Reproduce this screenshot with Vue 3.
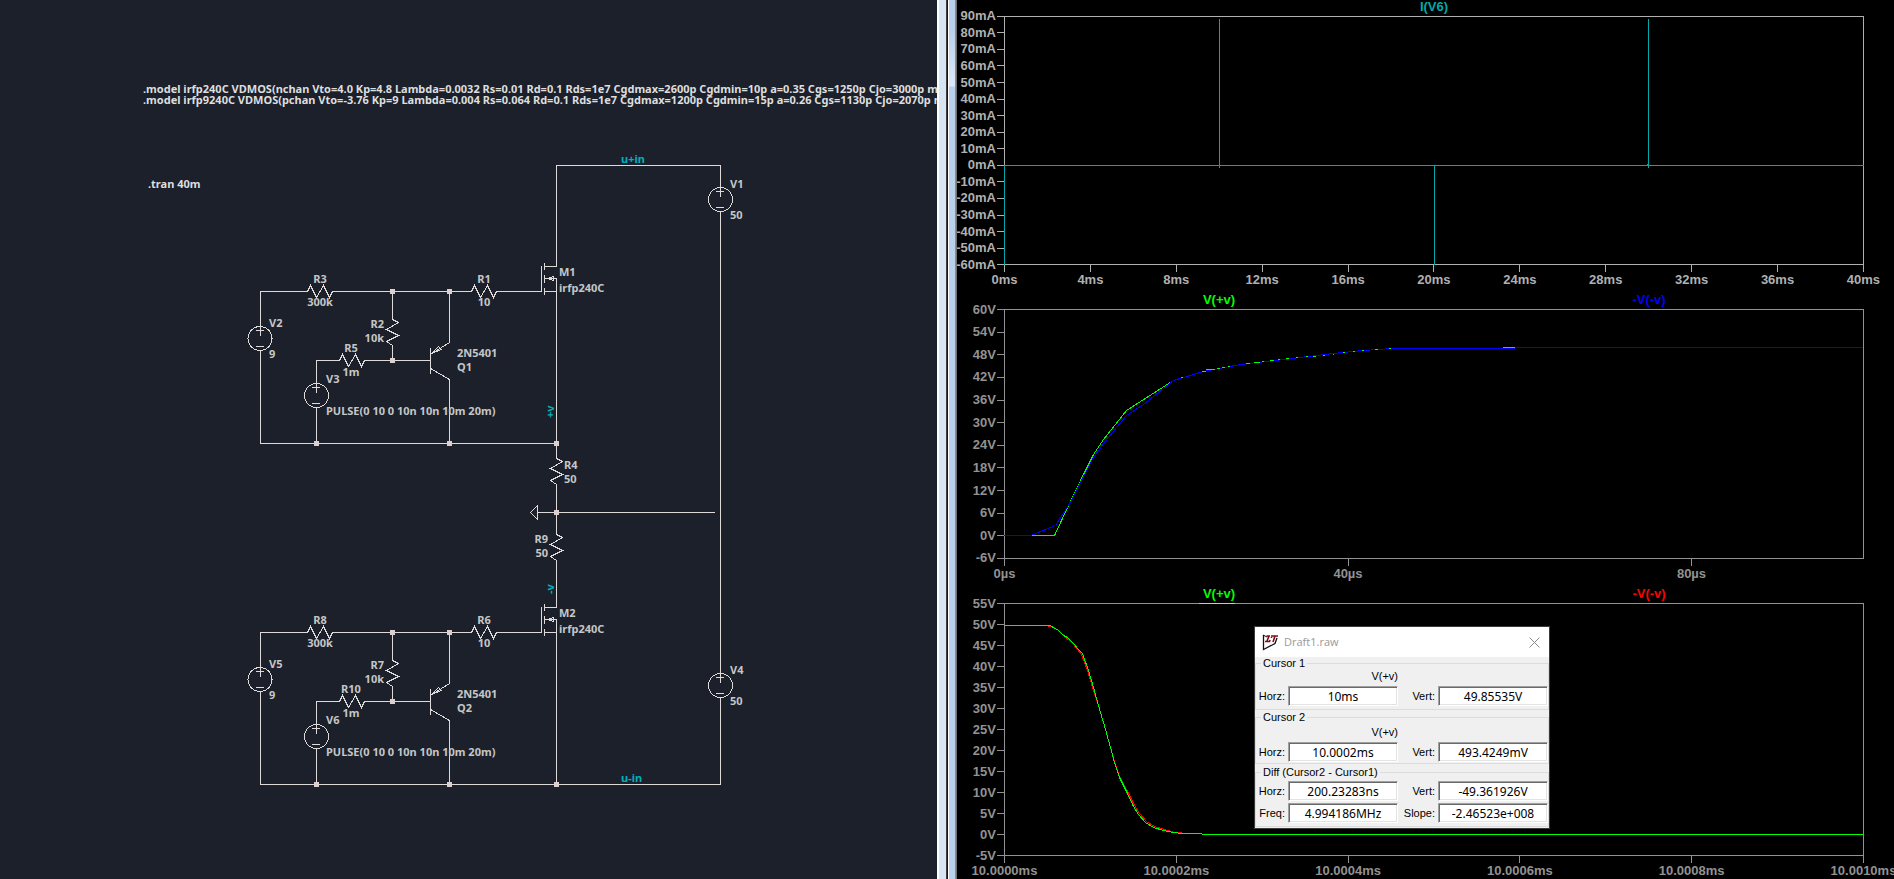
<script setup>
import { ref } from 'vue'

const range = (from, to, step, unit) => {
  const out = []
  for (let v = from; step > 0 ? v <= to : v >= to; v += step) out.push(v + unit)
  return out
}

const plots = [
  {
    id: 'current',
    height: 249,
    legends: [{ text: 'I(V6)', tone: 'teal' }],
    y: range(90, -60, -10, 'mA'),
    x: range(0, 40, 4, 'ms'),
    span: 100,
    lines: [
      { tone: 'teal', d: 'M0.5 248.5V149.5H860M215.5 3V152M430.5 149V249M644.5 3V152M643.5 148V150' }
    ]
  },
  {
    id: 'rise',
    height: 250,
    legends: [{ text: 'V(+v)', tone: 'green' }, { text: '-V(-v)', tone: 'blue' }],
    y: range(60, -6, -6, 'V'),
    x: range(0, 80, 40, 'µs'),
    span: 80,
    lines: [
      { tone: 'green', d: 'M27 226.5H50.5L64.5 196.5L78.5 167.5L89.5 145.5L99.5 130.5L122.5 101.5L169.5 71.5L199.5 62.5' },
      { tone: 'blue', d: 'M0 226.5H27L51.5 216.5L64.5 196.5L78.5 169.5L89.5 148.5L99.5 134.5L122.5 106.5L139.5 95.5L169.5 71.5L199.5 62.5L236.5 55.5L279.5 50.5L329.5 44.5L359.5 41.5L388 39.5H511M511 38.5H859' },
      { tone: 'green', d: 'M177 68.5h2M198 62.5h4M202 60.5h9M213 59.5h3M218 58.5h3M224 57.5h2M242 54.5h4M250 53.5h6M258 52.5h2M266 51.5h4M274 50.5h2M282 49.5h3M292 48.5h2M302 47.5h2M309 47.5h3M319 46.5h2M329 45.5h1M339 43.5h2M349 42.5h2M358 41.5h2M371 40.5h3M385 39.5h2M499 38.5h12' }
    ]
  },
  {
    id: 'fall',
    height: 253,
    legends: [{ text: 'V(+v)', tone: 'green' }, { text: '-V(-v)', tone: 'red' }],
    y: range(55, -5, -5, 'V'),
    x: ['10.0000ms', '10.0002ms', '10.0004ms', '10.0006ms', '10.0008ms', '10.0010ms'],
    span: 100,
    lines: [
      { tone: 'light', d: 'M195 0.5H231' },
      { tone: 'red', d: 'M44 23.5H48L54.5 27.5L68.5 40.5L73.5 46.5L77.5 51.5L83.5 67.5L88.5 84.5L94.5 102.5L101.5 126.5L106.5 144.5L110.5 158.5L115.5 173.5L123.5 188.5L130.5 202.5L135.5 210.5L142.5 218.5L150.5 223.5L160.5 226.5L170.5 229.5H178' },
      { tone: 'green', d: 'M0 22.5H46L54.5 27.5L59.5 32.5L63.5 34.5L69.5 40.5L74.5 46.5L78.5 50.5L84.5 67.5L89.5 84.5L94.5 102.5L101.5 126.5L106.5 144.5L110.5 159.5L115.5 174.5L123.5 190.5L129.5 203.5L134.5 211.5L141.5 219.5L149.5 224.5L159.5 227.5L169.5 229.5L178.5 230.5H198M198 231.5H859' }
    ]
  }
]

/* The two driver stages share one drawing, placed at different heights. */
const stages = [
  { y: 0, top: 'R3', gate: 'R1', bias: 'R2', base: 'R5', supply: 'V2', pulse: 'V3', fet: 'M1', bjt: 'Q1' },
  { y: 341, top: 'R8', gate: 'R6', bias: 'R7', base: 'R10', supply: 'V5', pulse: 'V6', fet: 'M2', bjt: 'Q2' }
]
const zigH = 'l3-6l6 12l7-12l6 12l3-6'
const zigV = 'l6 3l-12 7l12 6l-12 6l6 4'
const source = 'M-4-8H4M0.5-13V-3M-4 8H4'

const groups = [
  { title: 'Cursor 1', trace: 'V(+v)', fields: [['Horz:', '10ms'], ['Vert:', '49.85535V']] },
  { title: 'Cursor 2', trace: 'V(+v)', fields: [['Horz:', '10.0002ms'], ['Vert:', '493.4249mV']] },
  {
    title: 'Diff (Cursor2 - Cursor1)',
    fields: [['Horz:', '200.23283ns'], ['Vert:', '-49.361926V'], ['Freq:', '4.994186MHz'], ['Slope:', '-2.46523e+008']]
  }
]
const open = ref(true)
</script>

<template>
  <main class="workspace">
    <section class="schematic" aria-label="Schematic">
      <svg class="sheet" width="100%" height="100%">
        <g class="directive">
          <text x="143" y="93">.model irfp240C VDMOS(nchan Vto=4.0 Kp=4.8 Lambda=0.0032 Rs=0.01 Rd=0.1 Rds=1e7 Cgdmax=2600p Cgdmin=10p a=0.35 Cgs=1250p Cjo=3000p m=</text>
          <text x="143" y="104">.model irfp9240C VDMOS(pchan Vto=-3.76 Kp=9 Lambda=0.004 Rs=0.064 Rd=0.1 Rds=1e7 Cgdmax=1200p Cgdmin=15p a=0.26 Cgs=1130p Cjo=2070p m</text>
          <text x="148" y="188">.tran 40m</text>
        </g>

        <g class="wire">
          <path d="M556.5 266V165.5H720.5V187M720.5 212V673M720.5 698V784.5H556.5" />
          <path :d="'M556.5 443V458.5' + zigV + 'V534.5' + zigV + 'V607.5'" />
          <path d="M715 512.5H537.5M537.5 505.5V519.5L530.5 512.5Z" />
          <g v-for="y in [199.5, 685.5]" :key="y" :transform="`translate(720 ${y})`">
            <circle cx="0.5" r="12" /><path :d="source" />
          </g>
        </g>
        <rect class="node" x="554" y="510" width="5" height="5" />

        <g v-for="s in stages" :key="s.fet" :transform="`translate(0 ${s.y})`">
          <g class="wire">
            <path :d="'M260.5 326V291.5H307.5' + zigH + 'H471.5' + zigH + 'H541.5V265.5'" />
            <path d="M260.5 351V443.5H556.5V278.5H544.5M544.5 291.5H556.5M544.5 266.5H556.5" />
            <path d="M544.5 263V270M544.5 275V283M544.5 288V295M547 278.5L553.5 276.5V280.5Z" />
            <path :d="'M316.5 383V360.5H339.5' + zigH + 'H430.5M316.5 408V443.5'" />
            <path :d="'M392.5 291.5V319.5' + zigV + 'V360.5'" />
            <path d="M430.5 348V374M430.5 354.5L449.5 342.5V291.5M430.5 368.5L449.5 379.5V443.5" />
            <path d="M431.5 353.5L438.5 346.5L441.5 349.5Z" />
            <g transform="translate(260 338.5)"><circle r="12" /><path :d="source" /></g>
            <g transform="translate(316 395.5)"><circle cx="0.5" r="12" /><path :d="source" /></g>
          </g>
          <g class="node">
            <rect x="390" y="289" width="5" height="5" />
            <rect x="447" y="289" width="5" height="5" />
            <rect x="390" y="358" width="5" height="5" />
            <rect x="314" y="441" width="5" height="5" />
            <rect x="447" y="441" width="5" height="5" />
            <rect x="554" y="441" width="5" height="5" />
          </g>
          <g class="label middle">
            <text x="320" y="283">{{ s.top }}</text>
            <text x="320" y="306">300k</text>
            <text x="484" y="283">{{ s.gate }}</text>
            <text x="484" y="306">10</text>
            <text x="351" y="352">{{ s.base }}</text>
            <text x="351" y="376">1m</text>
          </g>
          <g class="label end">
            <text x="384" y="328">{{ s.bias }}</text>
            <text x="384" y="342">10k</text>
          </g>
          <g class="label">
            <text x="559" y="276">{{ s.fet }}</text>
            <text x="559" y="292">irfp240C</text>
            <text x="269" y="327">{{ s.supply }}</text>
            <text x="269" y="358">9</text>
            <text x="326" y="383">{{ s.pulse }}</text>
            <text x="326" y="415">PULSE(0 10 0 10n 10n 10m 20m)</text>
            <text x="457" y="357">2N5401</text>
            <text x="457" y="371">{{ s.bjt }}</text>
          </g>
        </g>

        <g class="label">
          <text x="730" y="188">V1</text>
          <text x="730" y="219">50</text>
          <text x="730" y="674">V4</text>
          <text x="730" y="705">50</text>
          <text x="564" y="469">R4</text>
          <text x="564" y="483">50</text>
        </g>
        <g class="label end">
          <text x="548" y="543">R9</text>
          <text x="548" y="557">50</text>
        </g>
        <g class="net">
          <text x="621" y="163">u+in</text>
          <text x="621" y="782">u-in</text>
          <text transform="translate(554 418) rotate(-90)">+v</text>
          <text transform="translate(554 594) rotate(-90)">-v</text>
        </g>
      </svg>
    </section>

    <div class="splitter" role="separator" aria-orientation="vertical">
      <i class="edge-left"></i><i class="gap"></i><i class="edge-right"></i><i class="rim"></i>
    </div>

    <section class="waves" aria-label="Waveforms">
      <article v-for="p in plots" :key="p.id" class="plot" :class="p.id">
        <header class="legends">
          <span v-for="l in p.legends" :key="l.text" :class="l.tone">{{ l.text }}</span>
        </header>
        <div class="y-axis">
          <span v-for="t in p.y" :key="t">{{ t }}</span>
        </div>
        <div class="frame">
          <svg :viewBox="`0 0 860 ${p.height}`" preserveAspectRatio="none">
            <path v-for="(l, i) in p.lines" :key="i" :class="l.tone" :d="l.d" />
          </svg>
        </div>
        <div class="x-axis">
          <div class="ticks" :style="{ width: p.span + '%' }">
            <span v-for="t in p.x" :key="t"><b>{{ t }}</b></span>
          </div>
        </div>
      </article>

      <div v-if="open" class="dialog" role="dialog" aria-label="Draft1.raw">
        <header class="titlebar">
          <svg class="logo" width="17" height="17" viewBox="0 0 17 17">
            <path d="M1.5 1V15.5L13 9.5L15 4" fill="none" stroke="#111" stroke-width="1.3" />
            <path d="M1 1L5 3" stroke="#111" />
            <path d="M4.500 2H8M7 2L5 7M3 7.500H7.500L8 6" fill="none" stroke="#8a0a14" stroke-width="1.6" />
            <path d="M9 2H16M13 2L11 8M9.500 3V4" fill="none" stroke="#8a0a14" stroke-width="1.6" />
          </svg>
          <h1>Draft1.raw</h1>
          <button type="button" aria-label="Close" @click="open = false">
            <svg width="11" height="11" viewBox="0 0 11 11"><path d="M0.500 0.500L10.500 10.500M10.500 0.500L0.500 10.500" fill="none" stroke="#8a8a8a" /></svg>
          </button>
        </header>
        <fieldset v-for="(g, gi) in groups" :key="g.title">
          <legend>{{ g.title }}</legend>
          <div class="fields">
            <span v-if="g.trace" class="trace">{{ g.trace }}</span>
            <template v-for="(f, fi) in g.fields" :key="f[0]">
              <label :for="`f${gi}${fi}`">{{ f[0] }}</label>
              <input :id="`f${gi}${fi}`" type="text" :value="f[1]" />
            </template>
          </div>
        </fieldset>
      </div>
    </section>
  </main>
</template>

<style>
body {
  background: #000;
}
</style>

<style scoped>
.workspace {
  display: flex;
  height: 100vh;
  overflow: hidden;
  background: #000;
}

.schematic {
  flex: 1 1 0;
  min-width: 0;
  background: #1b202b;
}
.sheet {
  display: block;
  font: bold 11px "Noto Sans", sans-serif;
}
.wire {
  fill: none;
  stroke: #dedada;
  stroke-width: 1;
  shape-rendering: crispEdges;
}
.node { fill: #dccfcf; }
.directive { fill: #dedede; }
.label { fill: #c6c6c6; }
.middle { text-anchor: middle; }
.end { text-anchor: end; }
.net { fill: #00b0be; }

.splitter {
  flex: none;
  display: flex;
  width: 20px;
}
.splitter i {
  box-sizing: border-box;
}
.edge-left {
  width: 9px;
  background: #d7e4f2;
  border-left: 2px solid #fcfdfe;
}
.gap {
  width: 2px;
  background: linear-gradient(to right, #555, #000);
}
.edge-right {
  width: 7px;
  border-left: 1px solid #fff;
  background: linear-gradient(to bottom, #b9d1ea 0, #b9d1ea 30px, #dfeaf6 86px, #b9d1ea 87px);
}
.rim {
  width: 2px;
  background: linear-gradient(to right, #9a9a9a, #666);
}

.waves {
  position: relative;
  flex: 1 1 0;
  min-width: 0;
  display: flex;
  flex-direction: column;
  overflow: hidden;
  background: #000;
  font: bold 13px/16px "Liberation Sans", Arial, sans-serif;
}
.plot {
  display: grid;
  grid-template-columns: 47px minmax(0, 1fr) 30px;
  grid-template-rows: 16px minmax(0, 1fr) 28px;
  min-height: 0;
  color: #929292;
}
.current { flex: 249 1 44px; color: #b0b0b0; }
.rise { flex: 250 1 44px; }
.fall { flex: 253 1 39px; grid-template-rows: 16px minmax(0, 1fr) 23px; }

.legends {
  grid-column: 2;
  display: flex;
  justify-content: space-around;
  line-height: 13px;
}
.legends span {
  flex: 1;
  text-align: center;
}
.y-axis {
  grid-column: 1;
  grid-row: 2;
  display: flex;
  flex-direction: column;
  justify-content: space-between;
  margin: -8px 0;
}
.y-axis span {
  display: flex;
  align-items: center;
  justify-content: flex-end;
  gap: 1px;
  height: 17px;
}
.y-axis span::after {
  content: "";
  flex: none;
  width: 7px;
  height: 1px;
  background: currentColor;
}
.frame {
  position: relative;
  grid-column: 2;
  grid-row: 2;
  border: 1px solid currentColor;
}
.frame svg {
  position: absolute;
  top: -1px;
  left: -1px;
  width: calc(100% + 2px);
  height: calc(100% + 2px);
}
.frame path {
  fill: none;
  stroke: currentColor;
  vector-effect: non-scaling-stroke;
  shape-rendering: crispEdges;
}
.x-axis {
  grid-column: 2;
  grid-row: 3;
}
.ticks {
  display: flex;
  justify-content: space-between;
}
.ticks span {
  display: flex;
  flex-direction: column;
  align-items: center;
  width: 1px;
  white-space: nowrap;
}
.ticks span::before {
  content: "";
  width: 1px;
  height: 7px;
  background: currentColor;
}
.teal { color: #00aaaa; }
.green { color: #00ff00; }
.blue { color: #0000ff; }
.red { color: #ff0000; }
.light { color: #c8c8c8; }

.dialog {
  position: absolute;
  right: 344px;
  bottom: 50px;
  width: 294px;
  border: 1px solid #3a3a3a;
  background: #f0f0f0;
  color: #000;
  font: 11px/13px "Liberation Sans", Arial, sans-serif;
}
.titlebar {
  display: flex;
  align-items: center;
  gap: 5px;
  height: 30px;
  padding: 0 9px 0 7px;
  background: #fff;
}
.titlebar h1 {
  flex: 1;
  margin: 0;
  color: #999;
  font: 11px/16px "Open Sans", sans-serif;
}
.titlebar button {
  display: flex;
  padding: 0;
  border: 0;
  background: none;
}
fieldset {
  min-width: 0;
  margin: 0 0 1px;
  padding: 0 0 3px;
  border: 1px solid #dcdcdc;
}
fieldset:nth-of-type(2) {
  margin-bottom: 2px;
  padding: 2px 0 1px;
}
fieldset:nth-of-type(3) {
  padding-top: 2px;
}
legend {
  margin-left: 5px;
  padding: 0 2px;
}
.fields {
  display: grid;
  grid-template-columns: 29px 110px 34px 110px;
  column-gap: 3px;
  row-gap: 2px;
  align-items: center;
}
.trace {
  grid-column: 1 / 3;
  height: 14px;
  line-height: 12px;
  text-align: right;
}
.trace + label {
  grid-column: 1;
}
label {
  text-align: right;
}
input {
  box-sizing: border-box;
  width: 110px;
  height: 20px;
  padding: 0 2px;
  border: 1px solid;
  border-color: #a0a0a0 #fff #fff #a0a0a0;
  background: #fff;
  box-shadow: inset 1px 1px #696969, inset -1px -1px #e3e3e3;
  color: #000;
  font: 12px/16px "Noto Sans", sans-serif;
  text-align: center;
}
</style>
